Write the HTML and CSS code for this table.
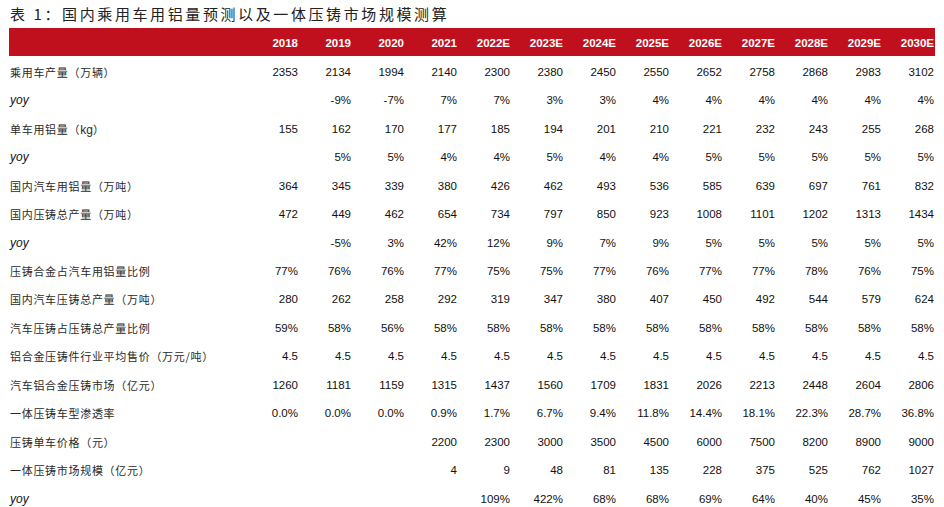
FILE: index.html
```html
<!DOCTYPE html>
<html lang="zh-CN">
<head>
<meta charset="utf-8">
<link rel="stylesheet" href="styles.css">
</head>
<body>
<div class="page">
  <div class="title">表 1：国内乘用车用铝量预测以及一体压铸市场规模测算</div>
  <div class="table">
    <div class="row head">
      <div class="label"></div>
      <div>2018</div><div>2019</div><div>2020</div><div>2021</div><div>2022E</div><div>2023E</div><div>2024E</div><div>2025E</div><div>2026E</div><div>2027E</div><div>2028E</div><div>2029E</div><div>2030E</div>
    </div>
    <div class="row">
      <div class="label">乘用车产量（万辆）</div>
      <div>2353</div><div>2134</div><div>1994</div><div>2140</div><div>2300</div><div>2380</div><div>2450</div><div>2550</div><div>2652</div><div>2758</div><div>2868</div><div>2983</div><div>3102</div>
    </div>
    <div class="row">
      <div class="label yoy">yoy</div>
      <div></div><div>-9%</div><div>-7%</div><div>7%</div><div>7%</div><div>3%</div><div>3%</div><div>4%</div><div>4%</div><div>4%</div><div>4%</div><div>4%</div><div>4%</div>
    </div>
    <div class="row">
      <div class="label">单车用铝量（<span class="lat">kg</span>）</div>
      <div>155</div><div>162</div><div>170</div><div>177</div><div>185</div><div>194</div><div>201</div><div>210</div><div>221</div><div>232</div><div>243</div><div>255</div><div>268</div>
    </div>
    <div class="row">
      <div class="label yoy">yoy</div>
      <div></div><div>5%</div><div>5%</div><div>4%</div><div>4%</div><div>5%</div><div>4%</div><div>4%</div><div>5%</div><div>5%</div><div>5%</div><div>5%</div><div>5%</div>
    </div>
    <div class="row">
      <div class="label">国内汽车用铝量（万吨）</div>
      <div>364</div><div>345</div><div>339</div><div>380</div><div>426</div><div>462</div><div>493</div><div>536</div><div>585</div><div>639</div><div>697</div><div>761</div><div>832</div>
    </div>
    <div class="row">
      <div class="label">国内压铸总产量（万吨）</div>
      <div>472</div><div>449</div><div>462</div><div>654</div><div>734</div><div>797</div><div>850</div><div>923</div><div>1008</div><div>1101</div><div>1202</div><div>1313</div><div>1434</div>
    </div>
    <div class="row">
      <div class="label yoy">yoy</div>
      <div></div><div>-5%</div><div>3%</div><div>42%</div><div>12%</div><div>9%</div><div>7%</div><div>9%</div><div>5%</div><div>5%</div><div>5%</div><div>5%</div><div>5%</div>
    </div>
    <div class="row">
      <div class="label">压铸合金占汽车用铝量比例</div>
      <div>77%</div><div>76%</div><div>76%</div><div>77%</div><div>75%</div><div>75%</div><div>77%</div><div>76%</div><div>77%</div><div>77%</div><div>78%</div><div>76%</div><div>75%</div>
    </div>
    <div class="row">
      <div class="label">国内汽车压铸总产量（万吨）</div>
      <div>280</div><div>262</div><div>258</div><div>292</div><div>319</div><div>347</div><div>380</div><div>407</div><div>450</div><div>492</div><div>544</div><div>579</div><div>624</div>
    </div>
    <div class="row">
      <div class="label">汽车压铸占压铸总产量比例</div>
      <div>59%</div><div>58%</div><div>56%</div><div>58%</div><div>58%</div><div>58%</div><div>58%</div><div>58%</div><div>58%</div><div>58%</div><div>58%</div><div>58%</div><div>58%</div>
    </div>
    <div class="row">
      <div class="label">铝合金压铸件行业平均售价（万元/吨）</div>
      <div>4.5</div><div>4.5</div><div>4.5</div><div>4.5</div><div>4.5</div><div>4.5</div><div>4.5</div><div>4.5</div><div>4.5</div><div>4.5</div><div>4.5</div><div>4.5</div><div>4.5</div>
    </div>
    <div class="row">
      <div class="label">汽车铝合金压铸市场（亿元）</div>
      <div>1260</div><div>1181</div><div>1159</div><div>1315</div><div>1437</div><div>1560</div><div>1709</div><div>1831</div><div>2026</div><div>2213</div><div>2448</div><div>2604</div><div>2806</div>
    </div>
    <div class="row">
      <div class="label">一体压铸车型渗透率</div>
      <div>0.0%</div><div>0.0%</div><div>0.0%</div><div>0.9%</div><div>1.7%</div><div>6.7%</div><div>9.4%</div><div>11.8%</div><div>14.4%</div><div>18.1%</div><div>22.3%</div><div>28.7%</div><div>36.8%</div>
    </div>
    <div class="row">
      <div class="label">压铸单车价格（元）</div>
      <div></div><div></div><div></div><div>2200</div><div>2300</div><div>3000</div><div>3500</div><div>4500</div><div>6000</div><div>7500</div><div>8200</div><div>8900</div><div>9000</div>
    </div>
    <div class="row">
      <div class="label">一体压铸市场规模（亿元）</div>
      <div></div><div></div><div></div><div>4</div><div>9</div><div>48</div><div>81</div><div>135</div><div>228</div><div>375</div><div>525</div><div>762</div><div>1027</div>
    </div>
    <div class="row">
      <div class="label yoy">yoy</div>
      <div></div><div></div><div></div><div></div><div>109%</div><div>422%</div><div>68%</div><div>68%</div><div>69%</div><div>64%</div><div>40%</div><div>45%</div><div>35%</div>
    </div>
  </div>
</div>
</body>
</html>
```

FILE: styles.css
```css
html, body {
  margin: 0;
  padding: 0;
  background: #ffffff;
}

.page {
  padding-left: 9px;
  width: 926px;
  font-family: "Liberation Sans", Arial, "Noto Sans CJK SC", sans-serif;
  color: #111111;
}

.title {
  height: 28px;
  line-height: 28px;
  padding-left: 1px;
  font-family: "Noto Sans CJK SC", sans-serif;
  font-size: 15px;
  letter-spacing: 2.6px;
  color: #222222;
  white-space: nowrap;
}

.table {
  display: flex;
  flex-direction: column;
}

.row {
  display: grid;
  grid-template-columns: 237px repeat(13, 53px);
  height: 28.47px;
  align-items: center;
  font-size: 11.5px;
  padding-top: 3px;
  box-sizing: border-box;
}

.row > div {
  text-align: right;
  padding-right: 1px;
  white-space: nowrap;
}

.row > .label {
  text-align: left;
  padding-left: 1px;
  font-family: "Noto Sans CJK SC", sans-serif;
  font-size: 11px;
  letter-spacing: 0.7px;
  color: #2a2a2a;
}

.row > .label .lat {
  font-family: "Liberation Sans", Arial, sans-serif;
  font-size: 12px;
  letter-spacing: 0;
}

.row > .label.yoy {
  font-family: "Liberation Sans", Arial, sans-serif;
  font-style: italic;
  font-size: 12px;
  letter-spacing: 0;
  color: #111111;
}

.row.head {
  height: 28px;
  padding-top: 2px;
  background: #c0101e;
  color: #ffffff;
  font-weight: bold;
}
```
